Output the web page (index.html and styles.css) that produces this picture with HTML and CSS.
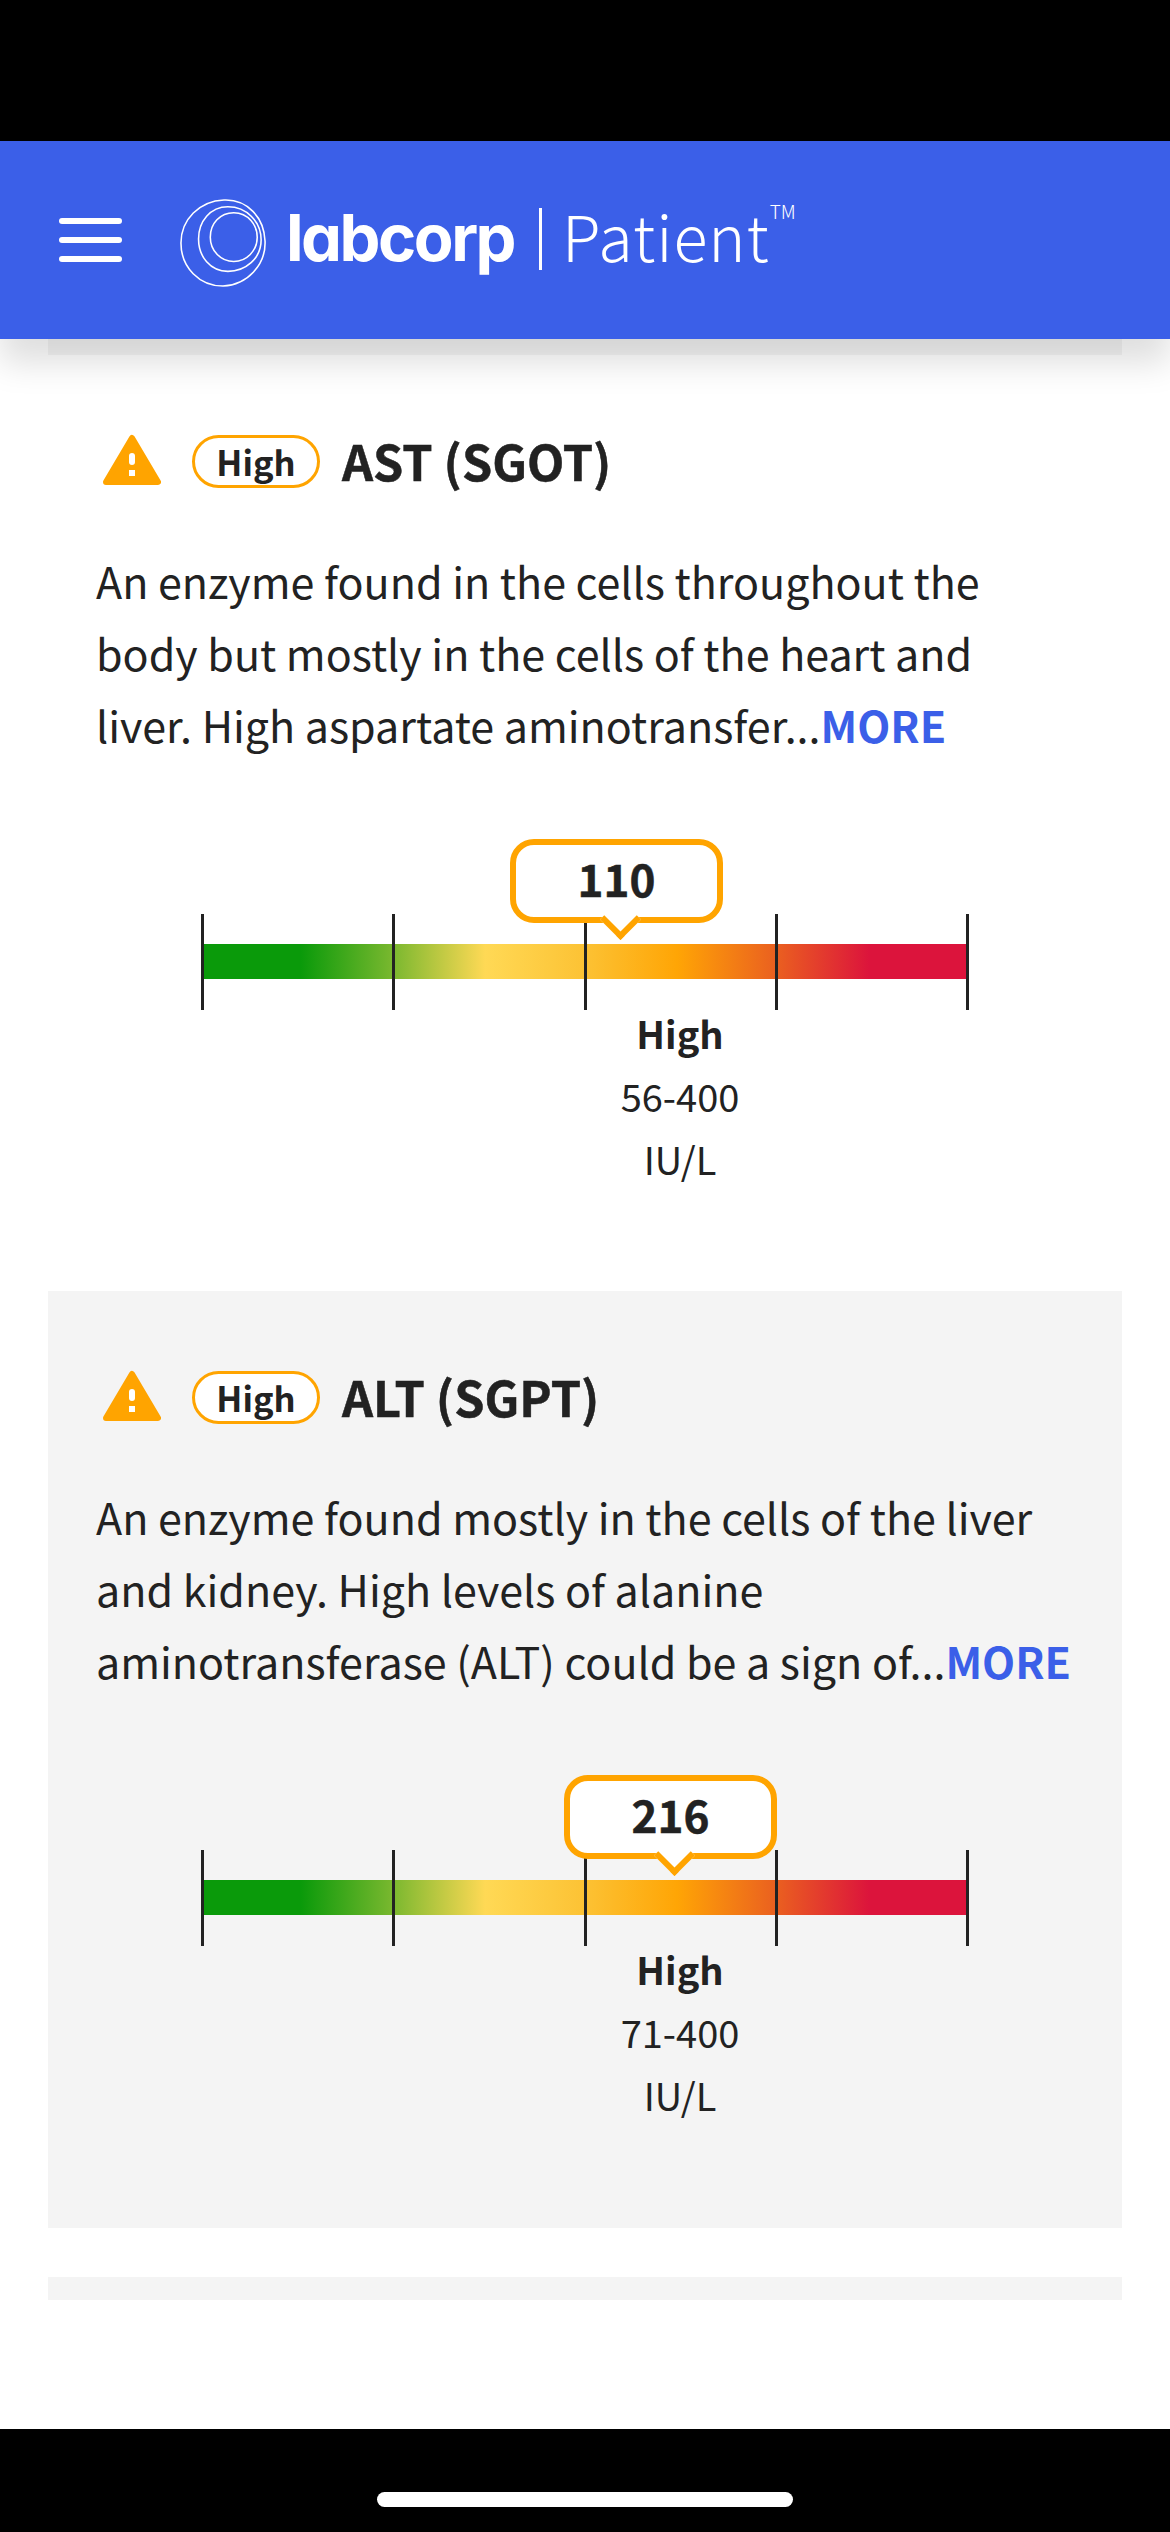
FILE: index.html
```html
<!DOCTYPE html>
<html lang="en">
<head>
  <meta charset="UTF-8">
  <meta name="viewport" content="width=device-width, initial-scale=1">
  <title>Labcorp Patient</title>
  <link rel="stylesheet" href="styles.css">
</head>
<body>
  <div class="status-bar"></div>

  <header class="app-header">
    <button class="menu-btn" aria-label="Menu">
      <span></span><span></span><span></span>
    </button>
    <div class="logo">
      <svg class="logo-mark" viewBox="0 0 90 92" fill="none" stroke="#fff" stroke-width="1.6">
        <path d="M46 2C70 1 87 20 88 44C89 68 70 89 45 90C21 90 2 71 2 46C2 22 21 3 46 2Z"/>
        <path d="M50 9C69 9 84 24 84 43C84 62 68 75 50 75C32 75 20 60 20 42C20 24 32 9 50 9Z"/>
        <path d="M56 15C71 15 80 28 80 40C80 54 69 65 56 65C43 65 32 54 32 40C32 26 42 15 56 15Z"/>
      </svg>
      <span class="logo-name">labcorp</span>
      <span class="logo-divider"></span>
      <span class="logo-sub">Patient</span>
      <span class="logo-tm">TM</span>
    </div>
  </header>

  <main class="results">
    <div class="card-tail"></div>

    <section class="card card-first">
      <div class="card-head">
        <svg class="warn-icon" viewBox="0 0 58 52">
          <path d="M29 4L55 48H3Z" fill="#ffa400" stroke="#ffa400" stroke-width="6" stroke-linejoin="round"/>
          <rect x="26" y="19" width="6" height="12" rx="3" fill="#fff"/>
          <rect x="26" y="36" width="6" height="6" fill="#fff"/>
        </svg>
        <span class="pill">High</span>
        <h3>AST (SGOT)</h3>
      </div>
      <p class="desc">An enzyme found in the cells throughout the body but mostly in the cells of the heart and liver. High aspartate aminotransfer...<a href="#">MORE</a></p>
      <div class="gauge">
        <div class="gauge-track">
          <div class="bubble" style="left: 415px">110</div>
          <div class="gauge-bar"></div>
          <div class="gauge-ticks"><i></i><i></i><i></i><i></i><i></i></div>
        </div>
        <div class="gauge-info">
          <strong>High</strong>
          <span>56-400</span>
          <span>IU/L</span>
        </div>
      </div>
    </section>

    <section class="card card-gray">
      <div class="card-head">
        <svg class="warn-icon" viewBox="0 0 58 52">
          <path d="M29 4L55 48H3Z" fill="#ffa400" stroke="#ffa400" stroke-width="6" stroke-linejoin="round"/>
          <rect x="26" y="19" width="6" height="12" rx="3" fill="#fff"/>
          <rect x="26" y="36" width="6" height="6" fill="#fff"/>
        </svg>
        <span class="pill">High</span>
        <h3>ALT (SGPT)</h3>
      </div>
      <p class="desc">An enzyme found mostly in the cells of the liver and kidney. High levels of alanine aminotransferase (ALT) could be a sign of...<a href="#">MORE</a></p>
      <div class="gauge">
        <div class="gauge-track">
          <div class="bubble" style="left: 469px">216</div>
          <div class="gauge-bar"></div>
          <div class="gauge-ticks"><i></i><i></i><i></i><i></i><i></i></div>
        </div>
        <div class="gauge-info">
          <strong>High</strong>
          <span>71-400</span>
          <span>IU/L</span>
        </div>
      </div>
    </section>

    <div class="card-next"></div>
  </main>

  <div class="home-bar"><span></span></div>
</body>
</html>
```

FILE: styles.css
```css
* {
  box-sizing: border-box;
}

body {
  font-family: "Noto Sans CJK JP", "Noto Sans", sans-serif;
  background-color: #fff;
  color: #222;
  margin: 0;
  height: 2532px;
  display: flex;
  flex-direction: column;
  overflow: hidden;
}

.status-bar {
  height: 141px;
  background-color: #000;
  flex: none;
}

.app-header {
  height: 198px;
  flex: none;
  background-color: #3b5fe8;
  display: flex;
  align-items: center;
  padding-left: 59px;
  box-shadow: 0 24px 32px rgba(0, 0, 0, 0.13);
  position: relative;
  z-index: 2;
}

.menu-btn {
  width: 63px;
  display: flex;
  flex-direction: column;
  gap: 13px;
  padding: 0;
  border: none;
  background: none;
}

.menu-btn span {
  display: block;
  height: 6px;
  border-radius: 3px;
  background-color: #fff;
}

.logo {
  display: flex;
  align-items: center;
  margin-left: 57px;
  margin-top: 6px;
  color: #fff;
}

.logo-mark {
  width: 88px;
  height: 90px;
}

.logo-name {
  font-family: Inter, sans-serif;
  font-feature-settings: "cv11";
  font-weight: 700;
  font-size: 65px;
  letter-spacing: -2.5px;
  margin-left: 19px;
  margin-top: -12px;
  line-height: 1;
}

.logo-divider {
  width: 3px;
  height: 62px;
  background-color: #fff;
  margin-left: 25px;
  margin-top: -8px;
}

.logo-sub {
  font-weight: 300;
  font-size: 63px;
  line-height: 1;
  margin-left: 20px;
  margin-top: -18px;
  letter-spacing: 1px;
}

.logo-tm {
  font-weight: 300;
  font-size: 19px;
  align-self: flex-start;
  line-height: 1;
  margin-top: 3px;
}

.results {
  flex: 1;
  display: flex;
  flex-direction: column;
  overflow: hidden;
}

.card-tail {
  height: 16px;
  margin: 0 48px;
  background-color: #f4f4f4;
  flex: none;
}

.card {
  margin: 0 48px 49px;
  padding: 78px 48px 0;
  height: 937px;
  flex: none;
}

.card-first {
  height: 887px;
}

.card-gray {
  background-color: #f4f4f4;
}

.card-next {
  height: 23px;
  margin: 0 48px;
  background-color: #f4f4f4;
  flex: none;
}

.card-head {
  display: flex;
  align-items: center;
  height: 54px;
}

.warn-icon {
  width: 58px;
  height: 52px;
  margin-left: 7px;
  flex: none;
}

.pill {
  width: 128px;
  height: 53px;
  margin: 2px 0 0 31px;
  border: 3.5px solid #ffa400;
  border-radius: 27px;
  background-color: #fff;
  display: flex;
  align-items: center;
  justify-content: center;
  font-size: 34.5px;
  font-weight: 700;
  line-height: 1;
}

.card-head h3 {
  margin: 0 0 0 22px;
  font-size: 48.5px;
  font-weight: 700;
  line-height: 1;
  -webkit-text-stroke: 0.5px #222;
}

.desc {
  margin: 57px 0 0;
  font-size: 43px;
  line-height: 72px;
  font-weight: 400;
}

.desc a {
  color: #3b5fe8;
  font-weight: 700;
  text-decoration: none;
}

.gauge {
  margin: 154px 0 0 105px;
  width: 768px;
}

.gauge-track {
  position: relative;
  padding-top: 30px;
  height: 96px;
}

.gauge-bar {
  height: 35px;
  background: linear-gradient(to right, #0a9a0a 0%, #0a9a0a 13%, #7ab82f 25%, #ffd955 37%, #fcc234 50%, #ffa505 62%, #ea5f20 75%, #dc143c 87%, #dc143c 100%);
}

.gauge-ticks {
  position: absolute;
  inset: 0;
  display: flex;
  justify-content: space-between;
}

.gauge-ticks i {
  width: 3px;
  background-color: #222;
}

.bubble {
  position: absolute;
  z-index: 1;
  top: -75px;
  width: 213px;
  height: 84px;
  margin-left: -106px;
  padding-bottom: 6px;
  border: 6px solid #ffa400;
  border-radius: 24px;
  background-color: #fff;
  display: flex;
  align-items: center;
  justify-content: center;
  font-size: 44px;
  font-weight: 700;
  line-height: 1;
  -webkit-text-stroke: 0.5px #222;
}

.bubble::after {
  content: "";
  position: absolute;
  left: 50%;
  bottom: -17px;
  width: 23px;
  height: 23px;
  margin-left: -11px;
  background-color: #fff;
  border-right: 6px solid #ffa400;
  border-bottom: 6px solid #ffa400;
  transform: rotate(45deg);
}

.gauge-info {
  display: flex;
  flex-direction: column;
  align-items: center;
  margin: -9px 0 0 190px;
  line-height: 63px;
  font-size: 38px;
}

.gauge-info strong {
  font-weight: 700;
}

.home-bar {
  height: 103px;
  flex: none;
  background-color: #000;
  display: flex;
  justify-content: center;
  padding-top: 63px;
}

.home-bar span {
  width: 416px;
  height: 15px;
  border-radius: 8px;
  background-color: #fff;
}
```
